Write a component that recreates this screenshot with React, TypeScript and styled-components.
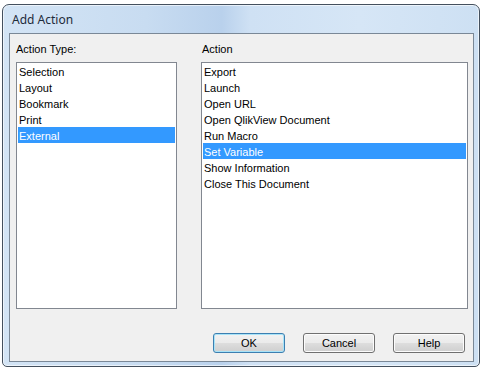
import styled, { createGlobalStyle } from 'styled-components';

const GlobalStyle = createGlobalStyle`
  body {
    margin: 0;
    background: #ffffff;
    font-family: "Liberation Sans", Arial, sans-serif;
  }
`;

const Window = styled.div`
  box-sizing: border-box;
  width: 478px;
  height: 363px;
  margin: 4px 0 0 2px;
  padding: 0 5px 4px 6px;
  display: flex;
  flex-direction: column;
  border: 1px solid #44505e;
  border-radius: 7px 7px 5px 5px;
  background: linear-gradient(
    90deg,
    #d3e4f5 0%,
    #c8dcf1 30%,
    #b9d1ec 46%,
    #cfe1f4 52%,
    #d6e6f6 75%,
    #cde0f3 100%
  );
  box-shadow: inset 0 0 0 1px rgba(255, 255, 255, 0.6);
`;

const TitleBar = styled.div`
  height: 28px;
  display: flex;
  align-items: center;
  padding-left: 3px;
  font-family: "Noto Sans", "Open Sans", sans-serif;
  font-size: 12px;
  color: #1e2b3a;
`;

const Client = styled.div`
  flex: 1;
  box-sizing: border-box;
  border: 1px solid #7a8897;
  background: #f0f0f0;
  padding: 8px 4px 0 6px;
  display: flex;
  flex-direction: column;
`;

const Columns = styled.div`
  display: grid;
  grid-template-columns: 161px 267px;
  column-gap: 24px;
  grid-template-rows: 19px 247px;
  row-gap: 1px;
`;

const Label = styled.div<{ $indent?: number }>`
  font-size: 11px;
  color: #000;
  padding-left: ${(p) => p.$indent ?? 0}px;
  line-height: 14px;
`;

const ListBox = styled.div`
  box-sizing: border-box;
  border: 1px solid #828790;
  background: #fff;
  padding: 0 1px;
  display: flex;
  flex-direction: column;
`;

const Item = styled.div<{ $selected?: boolean }>`
  height: 16px;
  line-height: 18px;
  overflow: hidden;
  font-size: 11px;
  padding-left: 1px;
  color: ${(p) => (p.$selected ? '#fff' : '#000')};
  background: ${(p) => (p.$selected ? '#3399ff' : 'transparent')};
`;

const ButtonRow = styled.div`
  display: flex;
  justify-content: flex-end;
  gap: 18px;
  padding: 24px 4px 0 0;
`;

const Button = styled.button<{ $default?: boolean }>`
  box-sizing: border-box;
  width: 72px;
  height: 20px;
  padding: 0;
  border: 1px solid ${(p) => (p.$default ? '#3c7fb1' : '#707070')};
  border-radius: 3px;
  font-family: "Liberation Sans", Arial, sans-serif;
  font-size: 11px;
  color: #000;
  background: linear-gradient(180deg, #f2f2f2 0%, #ebebeb 48%, #dddddd 52%, #cfcfcf 100%);
  box-shadow: inset 0 0 0 1px ${(p) => (p.$default ? '#a8e3f8' : '#fcfcfc')};
`;

const actionTypes = ['Selection', 'Layout', 'Bookmark', 'Print', 'External'];
const actions = [
  'Export',
  'Launch',
  'Open URL',
  'Open QlikView Document',
  'Run Macro',
  'Set Variable',
  'Show Information',
  'Close This Document',
];

export default function App() {
  return (
    <>
      <GlobalStyle />
      <Window>
        <TitleBar>Add Action</TitleBar>
        <Client>
          <Columns>
            <Label>Action Type:</Label>
            <Label $indent={1}>Action</Label>
            <ListBox>
              {actionTypes.map((t) => (
                <Item key={t} $selected={t === 'External'}>
                  {t}
                </Item>
              ))}
            </ListBox>
            <ListBox>
              {actions.map((a) => (
                <Item key={a} $selected={a === 'Set Variable'}>
                  {a}
                </Item>
              ))}
            </ListBox>
          </Columns>
          <ButtonRow>
            <Button $default>OK</Button>
            <Button>Cancel</Button>
            <Button>Help</Button>
          </ButtonRow>
        </Client>
      </Window>
    </>
  );
}
